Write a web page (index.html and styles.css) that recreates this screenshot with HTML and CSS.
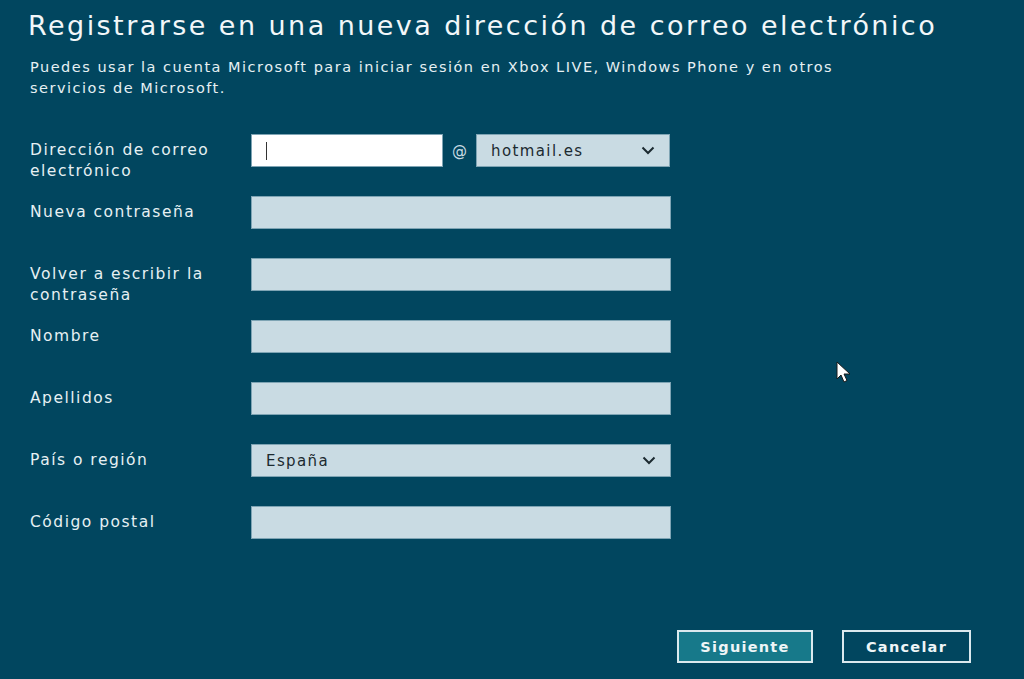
FILE: index.html
```html
<!DOCTYPE html>
<html lang="es">
<head>
    <meta charset="UTF-8">
    <title>Registrarse</title>
    <link rel="stylesheet" href="styles.css">
</head>
<body>
    <div class="page">
        <h1 class="title">Registrarse en una nueva dirección de correo electrónico</h1>
        <p class="intro">Puedes usar la cuenta Microsoft para iniciar sesión en Xbox LIVE, Windows Phone y en otros<br>servicios de Microsoft.</p>

        <div class="form">
            <div class="row">
                <label class="label">Dirección de correo<br>electrónico</label>
                <div class="email-group">
                    <div class="field field-active"><span class="caret"></span></div>
                    <span class="at">@</span>
                    <div class="field select">
                        <span>hotmail.es</span>
                        <svg class="chevron" width="14" height="9" viewBox="0 0 14 9"><path d="M1.5 1.5 L7 7 L12.5 1.5" fill="none" stroke="#1c2a30" stroke-width="2"/></svg>
                    </div>
                </div>
            </div>
            <div class="row">
                <label class="label">Nueva contraseña</label>
                <div class="field wide"></div>
            </div>
            <div class="row">
                <label class="label">Volver a escribir la<br>contraseña</label>
                <div class="field wide"></div>
            </div>
            <div class="row">
                <label class="label">Nombre</label>
                <div class="field wide"></div>
            </div>
            <div class="row">
                <label class="label">Apellidos</label>
                <div class="field wide"></div>
            </div>
            <div class="row">
                <label class="label">País o región</label>
                <div class="field wide select">
                    <span>España</span>
                    <svg class="chevron" width="14" height="9" viewBox="0 0 14 9"><path d="M1.5 1.5 L7 7 L12.5 1.5" fill="none" stroke="#1c2a30" stroke-width="2"/></svg>
                </div>
            </div>
            <div class="row">
                <label class="label">Código postal</label>
                <div class="field wide"></div>
            </div>
        </div>

        <div class="actions">
            <button class="btn btn-primary">Siguiente</button>
            <button class="btn">Cancelar</button>
        </div>
    </div>

    <svg class="pointer" width="18" height="24" viewBox="0 0 18 24">
        <path d="M1 1 L1 18 L5 14 L8 21 L11 19.5 L8 13 L14 13 Z" fill="#fff" stroke="#1a1a1a" stroke-width="1"/>
    </svg>
</body>
</html>
```

FILE: styles.css
```css
body {
    margin: 0;
    height: 679px;
    background: #01465f;
    font-family: "DejaVu Sans", "Open Sans", sans-serif;
    color: #e6f0f3;
    overflow: hidden;
    position: relative;
}

.page {
    padding: 7px 0 0 28px;
}

.title {
    font-size: 27px;
    font-weight: 400;
    margin: 0;
    line-height: 38px;
    letter-spacing: 2.45px;
    color: #f2f7f9;
    white-space: nowrap;
}

.intro {
    margin: 12px 0 0 2px;
    font-size: 14.5px;
    line-height: 21px;
    letter-spacing: 1.5px;
    color: #e6f0f3;
    white-space: nowrap;
}

.form {
    margin-top: 35px;
    display: flex;
    flex-direction: column;
    gap: 29px;
}

.row {
    display: flex;
    align-items: flex-start;
}

.label {
    width: 221px;
    padding-left: 2px;
    font-size: 15.5px;
    line-height: 21px;
    letter-spacing: 1.5px;
    margin-top: 6px;
    height: 27px;
    white-space: nowrap;
}

.email-group {
    display: flex;
    align-items: center;
}

.field {
    height: 31px;
    width: 190px;
    background: #c9dbe3;
    border: 1px solid #7ea4b4;
    box-sizing: content-box;
    color: #1c2a30;
    font-size: 15px;
    letter-spacing: 1.4px;
    display: flex;
    align-items: center;
}

.field-active {
    background: #fff;
    width: 190px;
}

.caret {
    width: 1px;
    height: 18px;
    background: #333;
    margin-left: 14px;
}

.at {
    width: 33px;
    text-align: center;
    font-size: 15px;
    color: #c9dbe3;
}

.select {
    width: 192px;
    justify-content: space-between;
}

.select span {
    margin-left: 14px;
}

.chevron {
    margin-right: 14px;
}

.wide {
    width: 418px;
}

.actions {
    display: flex;
    justify-content: flex-end;
    gap: 29px;
    margin: 91px 53px 0 0;
}

.btn {
    font-family: "DejaVu Sans", "Open Sans", sans-serif;
    font-size: 14.5px;
    font-weight: 700;
    letter-spacing: 1.25px;
    color: #eef5f7;
    background: #01465f;
    border: 2px solid #dbe9ee;
    height: 33px;
    padding: 0;
    width: 129px;
}

.btn-primary {
    background: #17798a;
    width: 136px;
}

.pointer {
    position: absolute;
    left: 836px;
    top: 361px;
}
```
